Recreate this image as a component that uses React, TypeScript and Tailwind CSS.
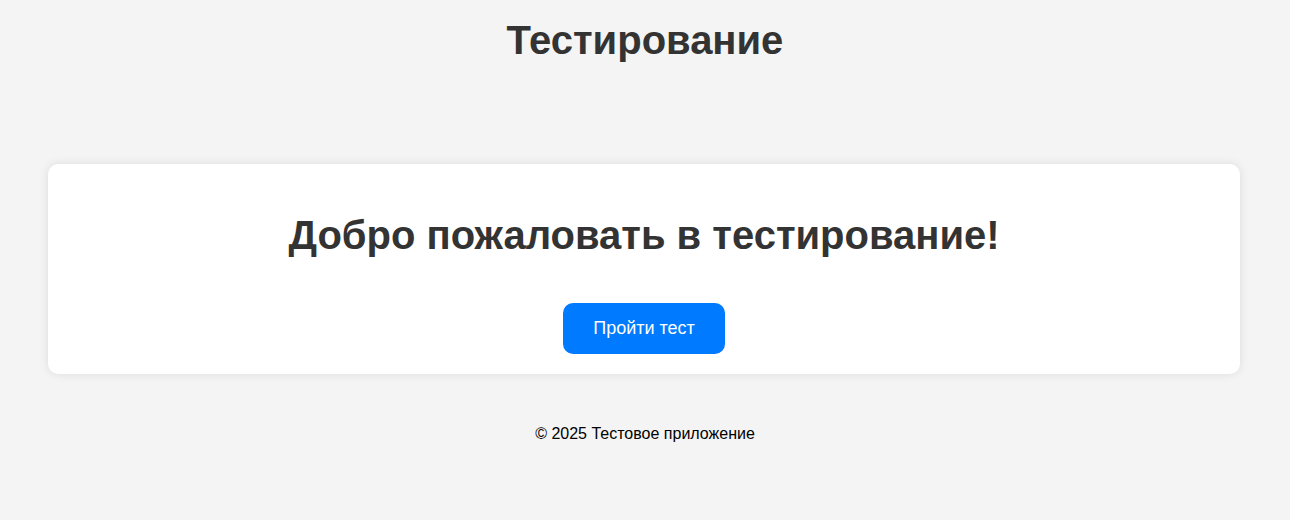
import React from 'react';

const App = () => {
  return (
    <div className="min-h-[520px] bg-[#f4f4f4] font-['Liberation_Sans',Arial,sans-serif] text-[#333]">
      {/* Header */}
      <header className="pt-[17px] text-center">
        <h1 className="text-[40px] leading-[46px] font-bold">Тестирование</h1>
      </header>

      {/* Welcome card */}
      <main className="mt-[101px] px-[48px] pr-[50px]">
        <div className="bg-white rounded-[10px] shadow-[0_0_10px_rgba(0,0,0,0.1)] flex flex-col items-center pt-[48px] pb-[20px]">
          <h2 className="text-[40px] leading-[46px] font-bold">Добро пожаловать в тестирование!</h2>
          <button
            type="button"
            className="mt-[45px] w-[162px] h-[51px] rounded-[10px] bg-[#007bff] text-white text-[18px]"
          >
            Пройти тест
          </button>
        </div>
      </main>

      {/* Footer */}
      <footer className="mt-[50px] text-center text-[16px] leading-[20px] text-black">
        © 2025 Тестовое приложение
      </footer>
    </div>
  );
};

export default App;
